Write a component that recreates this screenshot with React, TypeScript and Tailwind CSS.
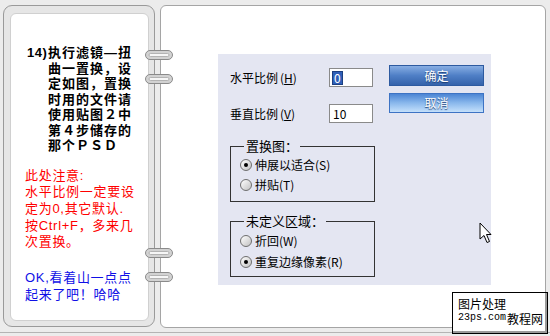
import type { ReactNode } from "react";

function Ring({ top }: { top: number }) {
  return (
    <svg
      className="absolute left-[145px]"
      style={{ top }}
      width="28"
      height="10"
      viewBox="0 0 28 10"
    >
      <rect x="0.5" y="0.5" width="27" height="9" rx="4.5" fill="#d2d2d2" stroke="#8a8a8a" />
      <rect x="4" y="3.5" width="20" height="3" rx="1.5" fill="#f6f6f6" stroke="#a6a6a6" strokeWidth="0.8" />
    </svg>
  );
}

function Radio({ checked, label }: { checked?: boolean; label: string }) {
  return (
    <div className="flex items-center h-[16px]">
      <span className="w-[12px] h-[12px] rounded-full border border-[#6f6f6f] bg-gradient-to-br from-white to-[#c2c2c2] flex items-center justify-center">
        {checked && <span className="w-[4px] h-[4px] rounded-full bg-black" />}
      </span>
      <span className="ml-[3px] text-[12px] leading-[16px] text-black">{label}</span>
    </div>
  );
}

function Field({ label, hot, value, className }: { label: string; hot: string; value: ReactNode; className?: string }) {
  return (
    <div className={`flex items-center h-[19px] ${className ?? ""}`}>
      <span className="w-[99px] text-[12px] text-black">
        {label}
        <span className="ml-[2px]">
          (<span className="underline">{hot}</span>)
        </span>
      </span>
      <div className="w-[44px] h-[19px] bg-white border border-[#8a8a8a] flex items-center pl-[3px] text-[12px] leading-none text-black">
        {value}
      </div>
    </div>
  );
}

export default function App() {
  return (
    <div className="relative w-[550px] h-[336px] bg-[#ececec] overflow-hidden font-['Noto_Sans_CJK_SC',sans-serif]">
      <div className="flex pt-[5px] pl-[3px] gap-[5px]">
        {/* left notebook page */}
        <div className="w-[152px] h-[322px] rounded-[9px] border border-[#9a9a9a] bg-[#e6e6e6] pl-[6px] pt-[7px] pr-[5px] pb-[5px]">
          <div className="h-full rounded-[6px] border border-[#d0d0d0] bg-white pt-[31px] font-['Liberation_Sans','Noto_Sans_CJK_SC',sans-serif]">
            <div className="flex pl-[16px] text-[13px] leading-[15.5px] font-bold text-black">
              <span className="w-[21px] tracking-[0.5px]">14)</span>
              <span className="w-[90px] tracking-[1px]">
                执行滤镜—扭<br />
                曲一置换，设<br />
                定如图，置换<br />
                时用的文件请<br />
                使用贴图２中<br />
                第４步储存的<br />
                那个ＰＳＤ
              </span>
            </div>
            <div className="mt-[14px] pl-[14px] text-[13px] leading-[16.7px] tracking-[0.7px] text-[#ff0000]">
              此处注意:<br />
              水平比例一定要设<br />
              定为0,其它默认.<br />
              按Ctrl+F，多来几<br />
              次置换。
            </div>
            <div className="mt-[18px] pl-[14px] text-[13px] leading-[17px] tracking-[0.7px] text-[#1010e6]">
              OK,看着山一点点<br />
              起来了吧！哈哈
            </div>
          </div>
        </div>

        {/* right page with dialog */}
        <div className="w-[386px] h-[323px] rounded-[6px] border border-[#a5a5a5] bg-white">
          <div className="ml-[57px] mt-[48px] w-[273px] h-[231px] bg-[#e4e6f2] pl-[12px] pt-[14px] flex">
            <div className="w-[145px]">
              <Field
                label="水平比例"
                hot="H"
                value={<span className="bg-[#2f5fb8] text-white px-[1px] outline outline-1 outline-[#1c3f80]">0</span>}
              />
              <Field label="垂直比例" hot="V" value="10" className="mt-[17px]" />

              <fieldset className="mt-[15px] h-[64px] border border-[#333] pl-[9px]">
                <legend className="ml-[4px] px-[2px] text-[13px] leading-[16px] text-black">置换图：</legend>
                <div className="mt-[3px] flex flex-col gap-[4px]">
                  <Radio checked label="伸展以适合(S)" />
                  <Radio label="拼贴(T)" />
                </div>
              </fieldset>

              <fieldset className="mt-[11px] h-[64px] border border-[#333] pl-[9px]">
                <legend className="ml-[4px] px-[2px] text-[13px] leading-[16px] text-black">未定义区域：</legend>
                <div className="mt-[4px] flex flex-col gap-[5px]">
                  <Radio label="折回(W)" />
                  <Radio checked label="重复边缘像素(R)" />
                </div>
              </fieldset>
            </div>

            <div className="ml-[14px] -mt-[3px] flex flex-col gap-[7px]">
              <button className="w-[95px] h-[21px] border border-[#2d5aa0] bg-gradient-to-b from-[#88aee3] via-[#4f7fc6] to-[#3563ab] text-white text-[12px] leading-none [text-shadow:0_1px_1px_#1a3a70]">
                确定
              </button>
              <button className="w-[95px] h-[20px] border border-[#3d73c4] bg-gradient-to-b from-[#4c85d4] via-[#8ab8ec] to-[#c4e0fb] text-white text-[12px] leading-none [text-shadow:0_1px_1px_#1a3a70]">
                取消
              </button>
            </div>
          </div>
        </div>
      </div>
      <div className="mt-[4px] h-px bg-[#b4b4b4]" />

      {/* binder rings */}
      <Ring top={50} />
      <Ring top={74} />
      <Ring top={248} />
      <Ring top={272} />

      {/* mouse cursor */}
      <svg className="absolute left-[479px] top-[222px]" width="13" height="22" viewBox="0 0 13 22">
        <path d="M1 1 L1 17 L5 13.5 L8 20.5 L10.5 19.5 L7.5 12.5 L12 12.5 Z" fill="white" stroke="black" strokeWidth="1" strokeLinejoin="round" />
      </svg>

      {/* watermark */}
      <div className="absolute left-[452px] top-[292px] w-[96px] h-[42px] bg-white border border-black shadow-[inset_-2px_-2px_0_#9a9a9a] flex pl-[5px] pt-[4px]">
        <div className="flex flex-col">
          <span className="text-[12px] leading-[14px] text-black">图片处理</span>
          <span className="mt-[1px] font-['Liberation_Mono',monospace] text-[10px] leading-[12px] text-black">23ps.com</span>
        </div>
        <span className="self-end mb-[7px] ml-[1px] text-[12px] leading-[15px] text-black">教程网</span>
      </div>
    </div>
  );
}
